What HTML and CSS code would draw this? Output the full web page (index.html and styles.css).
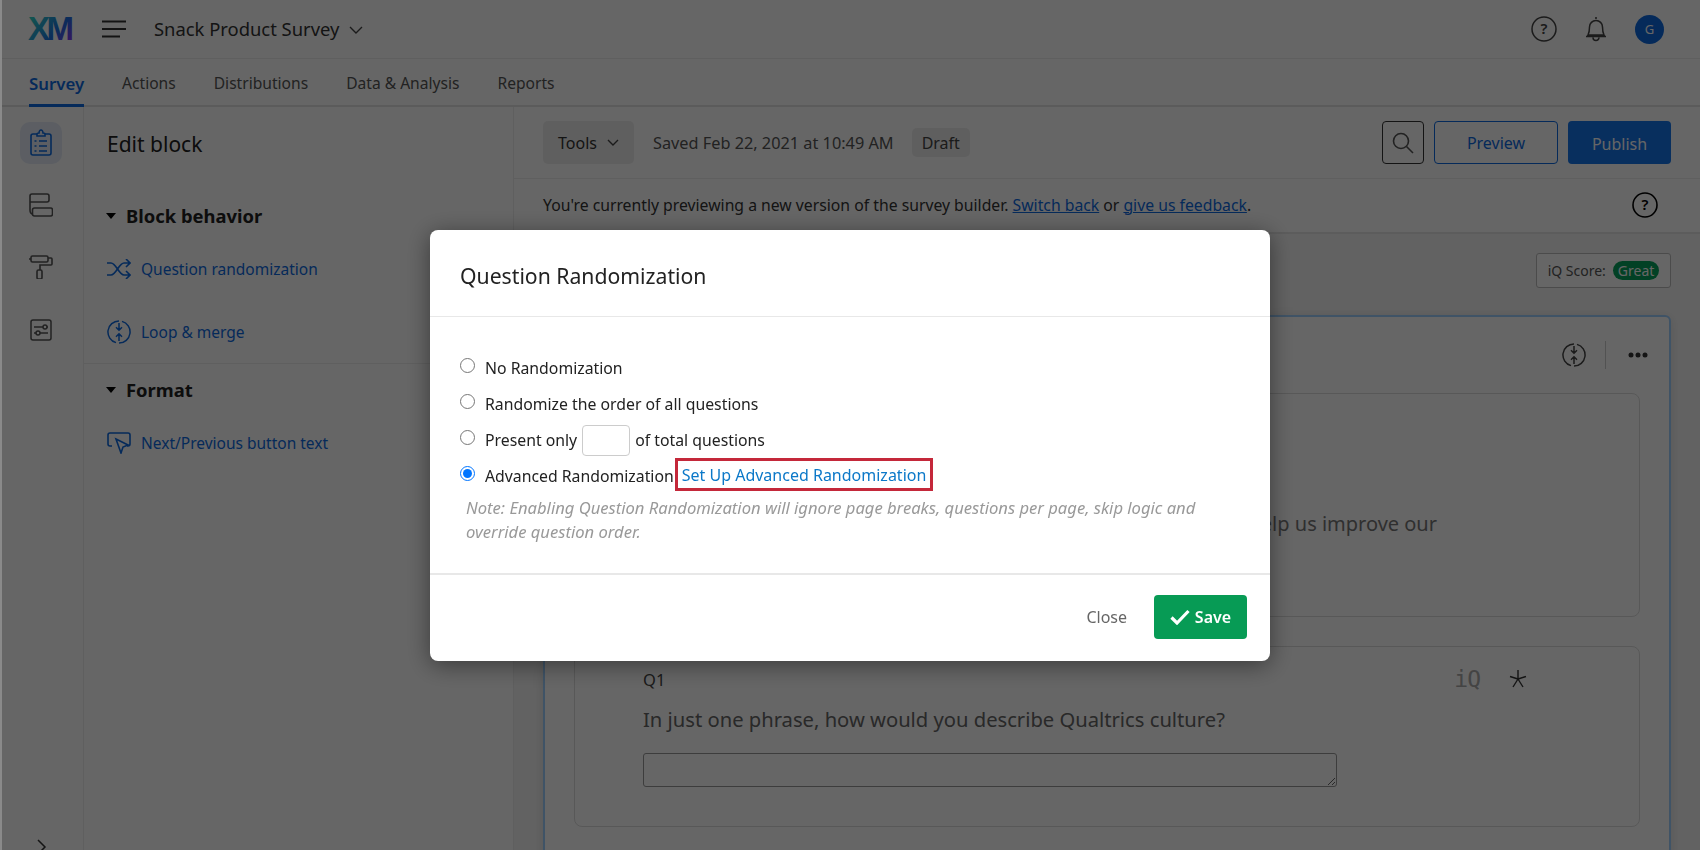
FILE: index.html
```html
<!DOCTYPE html>
<html lang="en">
<head>
<meta charset="utf-8">
<title>Snack Product Survey</title>
<link rel="stylesheet" href="styles.css">
</head>
<body>
<div class="page">
  <header class="topbar">
    <svg class="logo" width="60" height="44" viewBox="0 0 60 44">
      <defs><linearGradient id="xm" x1="0" y1="0" x2="1" y2=".7"><stop offset="0" stop-color="#30e8c0"/><stop offset=".35" stop-color="#2ab0d0"/><stop offset=".7" stop-color="#1a70e0"/><stop offset="1" stop-color="#7a3cf0"/></linearGradient></defs>
      <text x="0" y="33" font-family="Liberation Sans" font-size="33" font-weight="700" letter-spacing="-3.5" fill="url(#xm)">XM</text>
    </svg>
    <svg class="burger" width="24" height="18" viewBox="0 0 24 18"><path d="M0 1.500h24M0 9h24M0 16.500h18" stroke="#333" stroke-width="2" fill="none"/></svg>
    <span class="survey-name">Snack Product Survey</span>
    <svg class="caret" width="14" height="8" viewBox="0 0 14 8"><path d="M1 1l6 6 6-6" stroke="#444" stroke-width="1.400" fill="none"/></svg>
    <div class="top-icons">
      <svg width="26" height="26" viewBox="0 0 26 26"><circle cx="13" cy="13" r="12" stroke="#444" stroke-width="1.500" fill="none"/><text x="13" y="18" text-anchor="middle" class="qm">?</text></svg>
      <svg class="bell" width="22" height="26" viewBox="0 0 22 26"><path d="M11 1v2M3 19c1-2 1.500-3 1.500-8a6.500 6.500 0 0 1 13 0c0 5 .5 6 1.500 8zM1 20.500h20M8 21.500a3 3 0 0 0 6 0" stroke="#444" stroke-width="1.500" fill="none"/></svg>
      <span class="avatar">G</span>
    </div>
  </header>
  <nav class="tabs">
    <a class="tab active">Survey</a><a class="tab">Actions</a><a class="tab">Distributions</a><a class="tab">Data &amp; Analysis</a><a class="tab">Reports</a>
  </nav>
  <div class="body">
    <aside class="rail">
      <div class="rail-item current">
        <svg width="24" height="27" viewBox="0 0 24 27" fill="none" stroke="#0e6ae0" stroke-width="1.600"><path d="M8 5H4a2 2 0 0 0-2 2v17a2 2 0 0 0 2 2h16a2 2 0 0 0 2-2V7a2 2 0 0 0-2-2h-4"/><path d="M8 7V5c0-.5 1-1 2-1 0-1.500 1-3 2-3s2 1.500 2 3c1 0 2 .5 2 1v2z"/><path d="M10 12h8M10 17h8M10 22h8M5.500 12h2M5.500 17h2M5.500 22h2"/></svg>
      </div>
      <div class="rail-item">
        <svg width="24" height="24" viewBox="0 0 24 24" fill="none" stroke="#555" stroke-width="1.600"><path d="M1 17V3a2 2 0 0 1 2-2h15a2 2 0 0 1 2 2v4a2 2 0 0 1-2 2H1M1 17c0 2 1 4 3 4"/><rect x="3.500" y="15" width="20" height="8" rx="2"/></svg>
      </div>
      <div class="rail-item">
        <svg width="24" height="24" viewBox="0 0 24 24" fill="none" stroke="#555" stroke-width="1.600"><rect x="2" y="1" width="17" height="6" rx="1.500"/><path d="M2 4H0M19 3h3a1 1 0 0 1 1 1v5a1 1 0 0 1-1 1H11v5"/><rect x="8" y="15" width="5" height="9" rx="1.500"/></svg>
      </div>
      <div class="rail-item">
        <svg width="22" height="22" viewBox="0 0 22 22" fill="none" stroke="#555" stroke-width="1.500"><rect x="1" y="1" width="20" height="20" rx="2"/><path d="M4 8h9M17 8h1M4 14h2M10 14h8"/><circle cx="15" cy="8" r="2"/><circle cx="8" cy="14" r="2"/></svg>
      </div>
      <svg class="rail-expand" width="10" height="16" viewBox="0 0 10 16"><path d="M1 1l7 7-7 7" stroke="#333" stroke-width="1.500" fill="none"/></svg>
    </aside>
    <section class="side">
      <h2 class="side-title">Edit block</h2>
      <h3 class="side-head first"><i class="tri"></i>Block behavior</h3>
      <a class="side-link q-link">
        <svg width="24" height="20" viewBox="0 0 24 20" fill="none" stroke="#0e6ae0" stroke-width="1.600"><path d="M0 4h4c5 0 8 12 13 12h6M0 16h4c5 0 8-12 13-12h6M19 0l4 4-4 4M19 12l4 4-4 4"/></svg>
        Question randomization</a>
      <a class="side-link loop-link">
        <svg width="24" height="24" viewBox="0 0 24 24" fill="none" stroke="#0e6ae0" stroke-width="1.500"><path d="M12 1A11 11 0 0 0 9 22.600M15 1.400A11 11 0 0 1 12 23M12 3v7M9 7.200l3 3 3-3M12 21v-7M9 16.800l3-3 3 3"/></svg>
        Loop &amp; merge</a>
      <div class="side-rule"></div>
      <h3 class="side-head"><i class="tri"></i>Format</h3>
      <a class="side-link next-link">
        <svg width="24" height="22" viewBox="0 0 24 22" fill="none" stroke="#0e6ae0" stroke-width="1.600"><path d="M5 14H3a2 2 0 0 1-2-2V3a2 2 0 0 1 2-2h18a2 2 0 0 1 2 2v9a2 2 0 0 1-2 2h-1"/><path d="M9 7l12 6-5 2-2 6z"/></svg>
        Next/Previous button text</a>
    </section>
    <main class="main">
      <div class="toolbar">
        <button class="tools">Tools<svg width="12" height="7" viewBox="0 0 12 7"><path d="M1 1l5 5 5-5" stroke="#444" stroke-width="1.400" fill="none"/></svg></button>
        <span class="saved">Saved Feb 22, 2021 at 10:49 AM</span>
        <span class="draft">Draft</span>
        <button class="search"><svg width="22" height="22" viewBox="0 0 22 22" fill="none" stroke="#555" stroke-width="1.600"><circle cx="9" cy="9" r="7.500"/><path d="M14.500 14.500L21 21"/></svg></button>
        <button class="preview">Preview</button>
        <button class="publish">Publish</button>
      </div>
      <div class="notice">
        <span>You're currently previewing a new version of the survey builder. <a>Switch back</a> or <a>give us feedback</a>.</span>
        <svg width="26" height="26" viewBox="0 0 26 26"><circle cx="13" cy="13" r="12" stroke="#000" stroke-width="1.600" fill="none"/><text x="13" y="18" text-anchor="middle" class="qm strong">?</text></svg>
      </div>
      <div class="canvas">
        <div class="score-row"><span class="score">iQ Score: <b class="great">Great</b></span></div>
        <div class="block">
          <div class="block-tools">
            <svg width="24" height="24" viewBox="0 0 24 24" fill="none" stroke="#444" stroke-width="1.500"><path d="M12 1A11 11 0 0 0 9 22.600M15 1.400A11 11 0 0 1 12 23M12 3v7M9 7.200l3 3 3-3M12 21v-7M9 16.800l3-3 3 3"/></svg>
            <i class="tool-sep"></i>
            <svg width="20" height="6" viewBox="0 0 20 6" fill="#333"><circle cx="3" cy="3" r="2.500"/><circle cx="10" cy="3" r="2.500"/><circle cx="17" cy="3" r="2.500"/></svg>
          </div>
          <div class="qcard intro"><p class="intro-text">help us improve our</p></div>
          <div class="qcard q1">
            <div class="q-head"><span class="q-num">Q1</span><span class="iq">iQ</span>
              <svg class="star" width="18" height="18" viewBox="0 0 18 18"><path d="M9 0v9M9 9L1 6.500M9 9l8-2.500M9 9l-5 8M9 9l5 8" stroke="#333" stroke-width="1.400" fill="none"/></svg>
            </div>
            <p class="q-text">In just one phrase, how would you describe Qualtrics culture?</p>
            <textarea class="q-input"></textarea>
          </div>
        </div>
      </div>
    </main>
  </div>
</div>
<div class="edge"></div>
<div class="overlay">
  <div class="modal">
    <h2 class="modal-title">Question Randomization</h2>
    <div class="modal-body">
      <label class="opt"><input type="radio" name="r"><span>No Randomization</span></label>
      <label class="opt"><input type="radio" name="r"><span>Randomize the order of all questions</span></label>
      <label class="opt"><input type="radio" name="r"><span>Present only</span><input class="count" type="text"><span>of total questions</span></label>
      <label class="opt"><input type="radio" name="r" checked><span>Advanced Randomization</span><a class="adv">Set Up Advanced Randomization</a></label>
      <p class="note">Note: Enabling Question Randomization will ignore page breaks, questions per page, skip logic and override question order.</p>
    </div>
    <div class="modal-foot">
      <button class="close">Close</button>
      <button class="save"><svg width="20" height="16" viewBox="0 0 20 16"><path d="M1.500 8.500l5.500 5.500L18.500 2" stroke="#fff" stroke-width="3.200" fill="none"/></svg>Save</button>
    </div>
  </div>
</div>
</body>
</html>
```
FILE: styles.css
```css
* { box-sizing: border-box; }
html, body { margin: 0; height: 100%; overflow: hidden; }
body { font-family: "Noto Sans", "Open Sans", sans-serif; color: #222; background: #fff; font-size: 16px; }
h2, h3, p { margin: 0; font-weight: 400; }
button { font-family: inherit; cursor: pointer; }
.page { width: 1700px; height: 850px; display: flex; flex-direction: column; overflow: hidden; }
.edge { position: fixed; left: 0; top: 0; bottom: 0; width: 2px; background: #8a8a8a; z-index: 5; }
.overlay { position: fixed; inset: 0; background: rgba(0,0,0,.6); display: flex; justify-content: center; align-items: flex-start; padding-top: 230px; z-index: 4; }

.topbar { height: 59px; flex: none; display: flex; align-items: center; padding-left: 28px; border-bottom: 1px solid #eee; }
.logo { display: block; flex: none; margin-right: -14px; }
.burger { margin-left: 28px; }
.survey-name { margin-left: 28px; font-size: 18.400px; color: #333; padding-bottom: 2px; }
.caret { margin-left: 10px; margin-top: 2px; }
.top-icons { margin-left: auto; margin-right: 36px; display: flex; align-items: center; gap: 28px; }
.qm { font-family: "Noto Sans", sans-serif; font-size: 15px; font-weight: 600; fill: #444; }
.qm.strong { fill: #000; }
.avatar { width: 29px; height: 29px; border-radius: 50%; background: #0e6ae0; color: #fff; font-size: 13px; display: flex; align-items: center; justify-content: center; }

.tabs { height: 48px; flex: none; display: flex; padding-left: 29px; gap: 38px; border-bottom: 2px solid #e4e4e4; }
.tab { height: 48px; display: flex; align-items: center; color: #555; font-size: 15.600px; }
.tab.active { color: #0e6ae0; font-weight: 600; font-size: 16.800px; border-bottom: 3px solid #0e6ae0; padding-top: 3px; }

.body { flex: 1; display: flex; min-height: 0; }
.rail { width: 84px; flex: none; border-right: 1px solid #eee; padding: 15px 0 0 20px; position: relative; display: flex; flex-direction: column; }
.rail-item { width: 42px; height: 42px; margin-bottom: 20.500px; padding-bottom: 2px; display: flex; align-items: center; justify-content: center; border-radius: 10px; }
.rail-item.current { background: #e5ecf7; }
.rail-expand { position: absolute; left: 37px; top: 732px; }

.side { width: 430px; flex: none; border-right: 1px solid #eee; padding-top: 22px; }
.side-title { font-size: 21px; line-height: 30px; padding-left: 23px; }
.side-head { font-size: 18.400px; font-weight: 700; line-height: 28px; padding-left: 22px; display: flex; align-items: center; }
.side-head.first { margin-top: 43px; }
.tri { width: 0; height: 0; border-left: 5.500px solid transparent; border-right: 5.500px solid transparent; border-top: 6px solid #000; margin-right: 10px; }
.side-link { display: flex; align-items: center; gap: 10px; color: #0e6ae0; padding-left: 23px; height: 28px; font-size: 15.500px; }
.q-link { margin-top: 25px; }
.loop-link { margin-top: 35px; }
.side-rule { height: 1px; background: #eee; margin: 17px 0 12px; }
.next-link { margin-top: 25px; }

.main { flex: 1; min-width: 0; display: flex; flex-direction: column; }
.toolbar { height: 72px; flex: none; display: flex; align-items: center; padding: 0 29px; border-bottom: 1px solid #eee; }
.tools { width: 91px; height: 43px; border: 0; border-radius: 5px; background: #eee; color: #333; font-size: 16px; display: flex; align-items: center; justify-content: center; gap: 10px; padding: 0; }
.saved { margin-left: 19px; color: #555; font-size: 16.300px; }
.draft { margin-left: 18px; height: 29px; padding: 0 10px; display: flex; align-items: center; background: #eee; border-radius: 5px; color: #444; }
.search { margin-left: auto; width: 42px; height: 43px; background: #fff; border: 1px solid #333; border-radius: 4px; padding: 0; display: flex; align-items: center; justify-content: center; }
.preview { margin-left: 10px; width: 124px; height: 43px; background: #fff; border: 1px solid #0e6ae0; border-radius: 4px; color: #0e6ae0; font-size: 16px; }
.publish { margin-left: 10px; width: 103px; height: 43px; background: #1575ec; border: 0; border-radius: 4px; color: #fff; font-size: 16px; padding: 2px 0 0; }
.notice { height: 55px; flex: none; display: flex; align-items: center; justify-content: space-between; padding: 0 42px 2px 29px; border-bottom: 2px solid #e6e6e6; font-size: 15.750px; color: #333; }
.notice a { color: #0e6ae0; text-decoration: underline; }
.canvas { flex: 1; background: #f6f6f6; padding: 19px 29px 0 29px; min-height: 0; }
.score-row { display: flex; justify-content: flex-end; height: 35px; }
.score { width: 135px; height: 35px; border: 1px solid #bbb; border-radius: 3px; font-size: 14px; color: #555; display: flex; align-items: center; justify-content: center; gap: 7px; background: #fff; }
.great { font-weight: 400; color: #fff; background: #06a35c; border-radius: 10px; padding: 0 5px; line-height: 19px; }
.block { margin-top: 27px; height: 600px; background: #fff; border: 2px solid #9fd0ff; border-radius: 6px; padding: 0 29px; box-shadow: 0 2px 12px rgba(0,0,0,.12); }
.block-tools { height: 76px; display: flex; align-items: center; justify-content: flex-end; margin-right: -14px; padding-right: 6px; gap: 20px; }
.tool-sep { width: 1px; height: 28px; background: #ccc; margin: 0 2px 0 -1px; }
.qcard { border: 1px solid #ddd; border-radius: 8px; background: #fff; }
.intro { height: 224px; padding: 115px 202px 0 68px; overflow: hidden; display: flex; justify-content: flex-end; }
.intro-text { font-size: 20px; line-height: 30px; white-space: nowrap; color: #777; flex: none; }
.q1 { margin-top: 29px; height: 181px; padding: 19px 112px 0 68px; }
.q-head { display: flex; align-items: center; height: 26px; }
.q-num { font-size: 16.500px; color: #444; }
.iq { margin-left: auto; font-family: "DejaVu Sans Mono", monospace; font-size: 23px; letter-spacing: -1px; color: #aaa; }
.star { margin-left: 29px; }
.q-text { font-size: 20.200px; line-height: 30px; margin-top: 12px; white-space: nowrap; color: #666; }
.q-input { display: block; width: 694px; height: 34px; margin-top: 19px; border: 1px solid #999; border-radius: 3px; background: #fff; padding: 0; }

.modal { width: 840px; height: 431px; background: #fff; border-radius: 8px; box-shadow: 0 4px 24px rgba(0,0,0,.45); display: flex; flex-direction: column; }
.modal-title { height: 87px; flex: none; padding: 31px 0 0 30px; font-size: 21.200px; line-height: 30px; border-bottom: 1px solid #e8e8e8; }
.modal-body { height: 258px; flex: none; padding: 33px 30px 0 30px; border-bottom: 2px solid #e8e8e8; }
.opt { display: flex; align-items: center; height: 36px; font-size: 15.800px; }
.opt input[type=radio] { width: 15px; height: 15px; margin: 0 10px 6px 0; accent-color: #0075ff; }
.count { width: 48px; height: 31px; margin: 0 5px; border: 1px solid #ccc; border-radius: 4px; padding: 0; background: #fff; }
.adv { margin: 0 0 3px 1px; padding: 0 4px; height: 33px; display: flex; align-items: center; color: #0b78c8; border: 3px solid #c4283a; font-size: 16px; }
.note { margin: 2px 0 0 6px; width: 760px; color: #999; font-style: italic; font-size: 16.600px; line-height: 23.500px; }
.modal-foot { flex: 1; display: flex; align-items: center; justify-content: flex-end; padding: 0 23px 3px 0; gap: 27px; }
.close { border: 0; background: none; color: #666; font-size: 16px; padding: 0; }
.save { width: 93px; height: 44px; border: 0; border-radius: 4px; background: #079b55; color: #fff; font-size: 16px; font-weight: 600; display: flex; align-items: center; justify-content: center; gap: 5px; padding: 0; }
```
